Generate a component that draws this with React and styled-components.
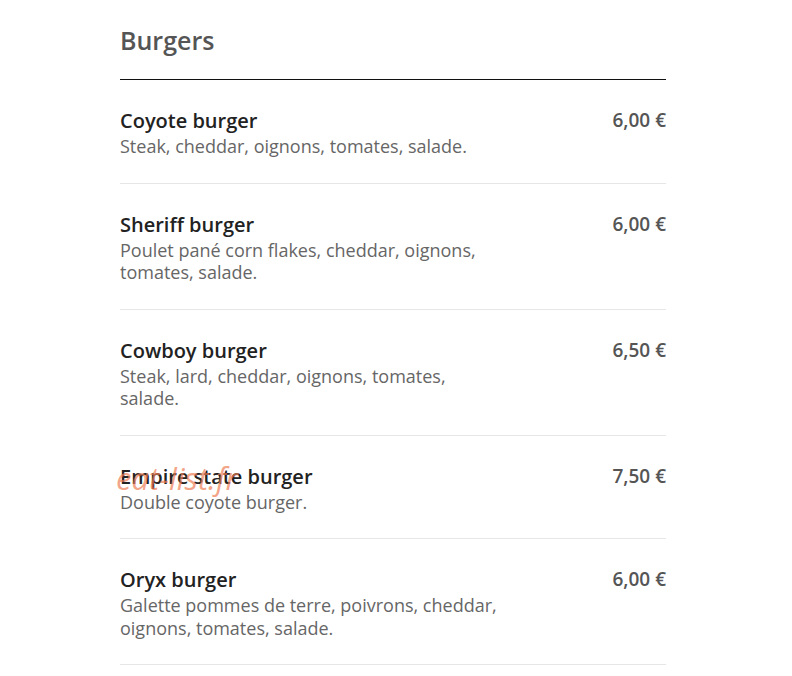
import React from "react";
import styled, { createGlobalStyle } from "styled-components";

const Global = createGlobalStyle`
  html, body { margin: 0; padding: 0; background: #fff; }
  body { font-family: "Open Sans", "Noto Sans", sans-serif; }
`;

const Page = styled.div`
  width: 792px;
  min-height: 676px;
  background: #fff;
`;

const Section = styled.section`
  margin-left: 120px;
  width: 546px;
  position: relative;
`;

const Header = styled.div`
  padding-top: 24px;
  padding-bottom: 23px;
  border-bottom: 1px solid #111;
`;

const Title = styled.h2`
  margin: 0;
  font-size: 25px;
  line-height: 32px;
  font-weight: 600;
  color: #555;
`;

const Item = styled.div`
  position: relative;
  display: flex;
  justify-content: space-between;
  align-items: flex-start;
  padding: 26px 0 25px;
  border-bottom: 1px solid #e6e6e6;
`;

const Info = styled.div`
  width: 70%;
`;

const Name = styled.div`
  font-size: 20px;
  line-height: 29px;
  font-weight: 600;
  color: #222;
`;

const Desc = styled.div`
  font-size: 18px;
  line-height: 22.5px;
  color: #666;
`;

const Price = styled.div`
  font-size: 19px;
  line-height: 29px;
  font-weight: 600;
  color: #555;
  white-space: nowrap;
`;

const Watermark = styled.span`
  position: absolute;
  left: -4px;
  top: 24px;
  font-family: "Open Sans", sans-serif;
  font-style: italic;
  font-weight: 400;
  font-size: 31px;
  line-height: 36px;
  color: rgba(238, 125, 85, 0.7);
  pointer-events: none;
`;

const items = [
  { name: "Coyote burger", desc: "Steak, cheddar, oignons, tomates, salade.", price: "6,00 €" },
  { name: "Sheriff burger", desc: "Poulet pané corn flakes, cheddar, oignons, tomates, salade.", price: "6,00 €" },
  { name: "Cowboy burger", desc: "Steak, lard, cheddar, oignons, tomates, salade.", price: "6,50 €" },
  { name: "Empire state burger", desc: "Double coyote burger.", price: "7,50 €", mark: true },
  { name: "Oryx burger", desc: "Galette pommes de terre, poivrons, cheddar, oignons, tomates, salade.", price: "6,00 €" },
];

export default function App() {
  return (
    <Page>
      <Global />
      <Section>
        <Header>
          <Title>Burgers</Title>
        </Header>
        {items.map((it) => (
          <Item key={it.name}>
            <Info>
              <Name>{it.name}</Name>
              <Desc>{it.desc}</Desc>
            </Info>
            <Price>{it.price}</Price>
            {it.mark && <Watermark>eat-list.fr</Watermark>}
          </Item>
        ))}
      </Section>
    </Page>
  );
}
